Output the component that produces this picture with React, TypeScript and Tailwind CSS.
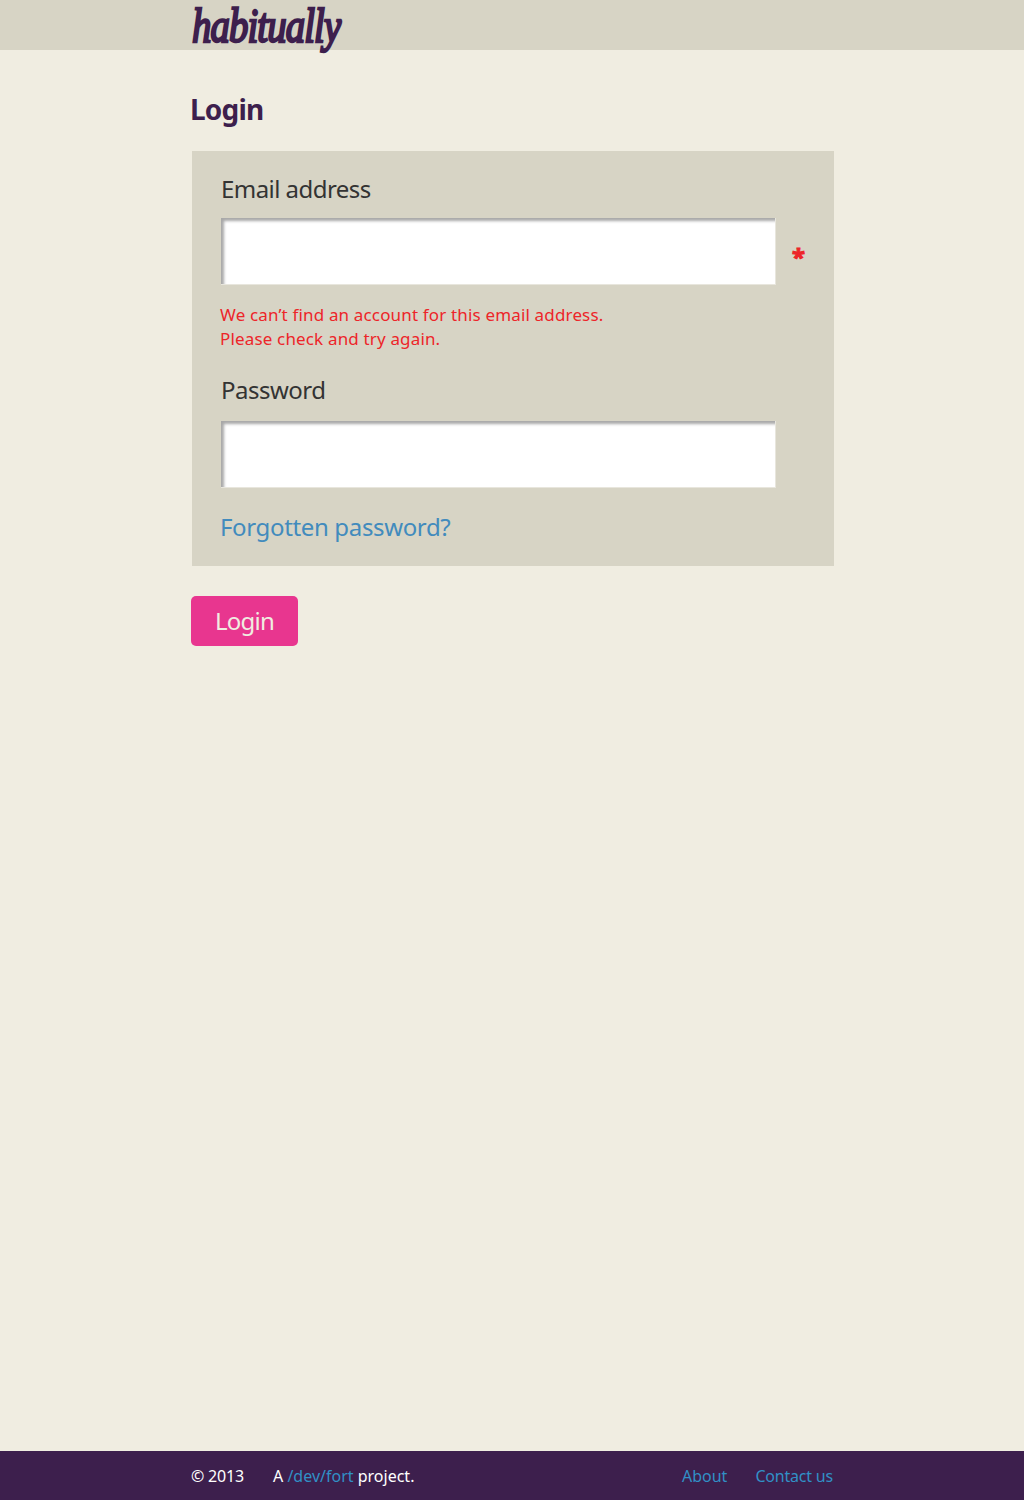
function Logo() {
  return (
    <a
      href="#"
      aria-label="habitually"
      className="block h-[50px] w-[150px] origin-left scale-x-[0.79] whitespace-nowrap font-['Liberation_Serif',cursive] text-[49px] italic leading-[51px] tracking-[-1.1px] [-webkit-text-stroke:2.5px_#3d1f4d] [stroke-linejoin:round]"
    >
      habitually
    </a>
  );
}

function Field({ id, label, type }: { id: string; label: string; type: string }) {
  return (
    <input
      id={id}
      type={type}
      aria-label={label}
      className="block h-[67px] w-[555px] border-r border-b border-[#e8e6dd] bg-white px-4 text-2xl shadow-[inset_3px_3px_3px_0px_#a8a8a8] outline-none"
    />
  );
}

export default function App() {
  return (
    <div className="flex min-h-[1500px] flex-col bg-[#f0ede1] font-['Noto_Sans',sans-serif] text-[#333333]">
      <header className="h-[50px] bg-[#d7d4c5] pl-[192px] text-[#3d1f4d]">
        <Logo />
      </header>

      <main className="flex-1 pt-[39px] pl-[191px]">
        <h1 className="-ml-px text-[28px] leading-10 font-bold tracking-[-0.8px] text-[#3d1f4d]">Login</h1>

        <form>
          <section className="mt-[22px] ml-px w-[642px] bg-[#d7d4c5] pt-[22px] pr-[29px] pb-[23px] pl-[29px]">
            <label htmlFor="email" className="block text-2xl leading-8 tracking-[-0.55px]">
              Email address
            </label>
            <div className="mt-[13px] flex items-center justify-between">
              <Field id="email" label="Email address" type="email" />
              <span className="pt-2.5 text-2xl leading-8 font-bold text-[#ed2529] [-webkit-text-stroke:1px_#ed2529]">*</span>
            </div>
            <p className="mt-[18px] -ml-px text-[17px] leading-6 tracking-[0.16px] text-[#ed2529]">
              We can’t find an account for this email address.
              <br />
              Please check and try again.
            </p>
            <label htmlFor="password" className="mt-[23px] block text-2xl leading-8 tracking-[-0.5px]">
              Password
            </label>
            <div className="mt-[15px]">
              <Field id="password" label="Password" type="password" />
            </div>
            <a href="#" className="mt-[23px] -ml-px block text-2xl leading-8 tracking-[-0.35px] text-[#428bbd]">
              Forgotten password?
            </a>
          </section>

          <button
            type="button"
            className="mt-[30px] flex h-[50px] w-[107px] items-center justify-center rounded-[5px] bg-[#e8368f] text-2xl tracking-[-0.8px] text-[#f0ede1]"
          >
            Login
          </button>
        </form>
      </main>

      <footer className="flex h-[49px] items-center bg-[#3d1f4d] pr-[191px] pl-[191px] text-base text-white">
        <span className="w-[82px] tracking-[-0.2px]">© 2013</span>
        <span>
          A{" "}
          <a href="#" className="text-[#3190c6]">/dev/fort</a>
          {" "}project.
        </span>
        <nav className="ml-auto flex gap-7 text-[#3190c6]">
          <a href="#">About</a>
          <a href="#" className="tracking-[-0.2px]">Contact us</a>
        </nav>
      </footer>
    </div>
  );
}
